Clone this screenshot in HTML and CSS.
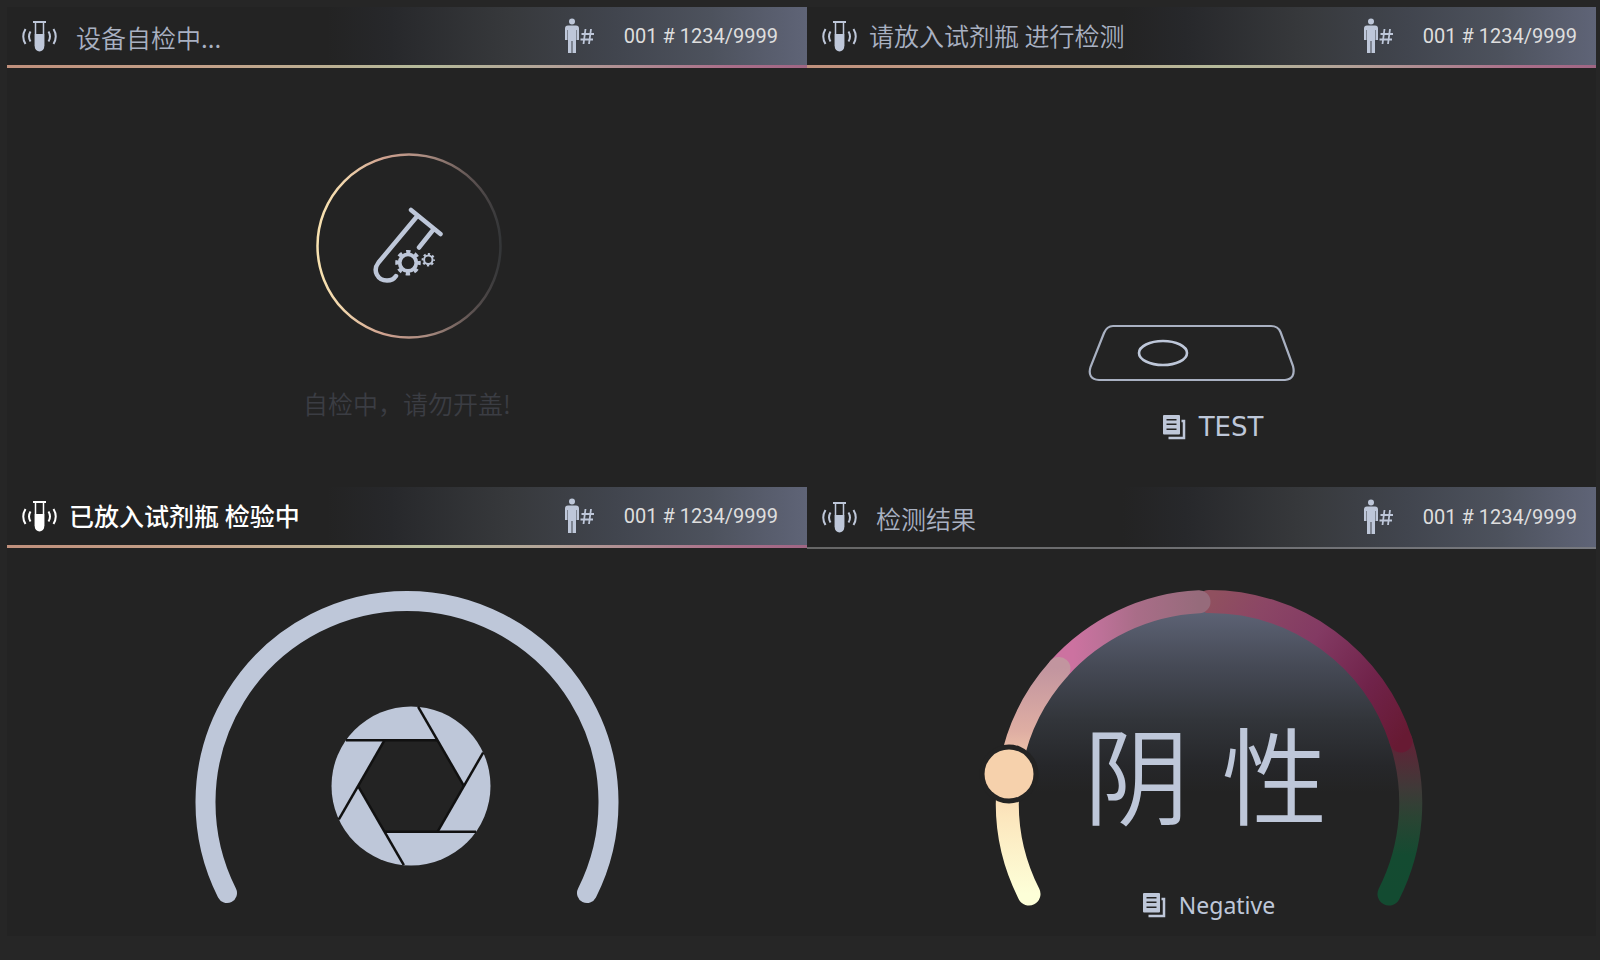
FILE: index.html
```html
<!DOCTYPE html>
<html lang="zh-CN">
<head>
    <meta charset="UTF-8">
    <meta name="viewport" content="width=device-width, initial-scale=1.0">
    <title>试剂检测</title>
    <link rel="stylesheet" href="styles.css">
</head>
<body>
    <!-- Shared icons -->
    <svg class="sprite" aria-hidden="true">
        <symbol id="icon-tube" viewBox="1 0 36 32">
            <path d="M12 2H25" fill="none" stroke="currentColor" stroke-width="2"/>
            <path d="M14.500 2V26M22.500 2V26" fill="none" stroke="currentColor" stroke-width="1.500"/>
            <path d="M13.750 14H23.250V26.700a4.750 4.750 0 0 1-9.500 0z" fill="currentColor"/>
            <path d="M9.500 11.500Q6.500 16.500 9.500 21.500M4.500 9Q0 16.500 4.500 24M27.500 11.500Q30.500 16.500 27.500 21.500M32.500 9Q37 16.500 32.500 24" fill="none" stroke="currentColor" stroke-width="2"/>
        </symbol>
        <symbol id="icon-person" viewBox="0 0 30 36">
            <circle cx="8" cy="3.500" r="3" fill="currentColor"/>
            <path d="M4 7.500H12Q15 7.500 15 10.500V22H12.500V12H12V35H8.500V23H7.500V35H4V12H3.500V22H1V10.500Q1 7.500 4 7.500z" fill="currentColor"/>
            <path d="M21.500 11L19.500 26M27 11L25 26M17.500 16H30M16.500 21.500H29" fill="none" stroke="currentColor" stroke-width="1.800"/>
        </symbol>
        <symbol id="icon-doc" viewBox="0 0 24 26">
            <path d="M2 1H17a1 1 0 0 1 1 1V19.500a1 1 0 0 1-1 1H2a1 1 0 0 1-1-1V2a1 1 0 0 1 1-1zM4.500 5V6.500H14.500V5zM4.500 9.500V11H14.500V9.500zM4.500 14.500V16H14.500V14.500z" fill="currentColor" fill-rule="evenodd"/>
            <path d="M19.500 7H22V24H6.500" fill="none" stroke="currentColor" stroke-width="2.500"/>
        </symbol>
    </svg>

    <main class="board">
        <section class="panel panel-check">
            <header class="bar bar-wide">
                <svg class="icon-tube"><use href="#icon-tube"/></svg>
                <h2 class="title">设备自检中...</h2>
                <svg class="icon-person"><use href="#icon-person"/></svg>
                <span class="count">001 # 1234/9999</span>
            </header>
            <div class="stage">
                <svg class="spinner" viewBox="0 0 186 186">
                    <defs>
                        <linearGradient id="ring" x1="0" x2="1" y1="0" y2="0">
                            <stop offset="0" stop-color="#f8e2b0"/>
                            <stop offset="0.15" stop-color="#f0d4ac"/>
                            <stop offset="0.36" stop-color="#cfa18f"/>
                            <stop offset="0.6" stop-color="#a98b80"/>
                            <stop offset="0.85" stop-color="#5b5150"/>
                            <stop offset="1" stop-color="#343638"/>
                        </linearGradient>
                    </defs>
                    <circle cx="93" cy="93" r="91.500" fill="none" stroke="url(#ring)" stroke-width="2.500"/>
                    <path d="M95 57L124.500 81M100.500 64L62.500 109.500C56 118 62 127.500 71 127.500Q77 127.500 80 123M117 77L103 94.500" fill="none" stroke="#bec7d9" stroke-width="4.500" stroke-linecap="round" stroke-linejoin="round"/>
                    <circle cx="92" cy="109.700" r="8.300" fill="none" stroke="#bec7d9" stroke-width="3.800"/>
                    <circle cx="92" cy="109.700" r="11" fill="none" stroke="#bec7d9" stroke-width="3.500" stroke-dasharray="4.320" stroke-dashoffset="2.160"/>
                    <circle cx="112.300" cy="106.700" r="4.200" fill="none" stroke="#bec7d9" stroke-width="2"/>
                    <circle cx="112.300" cy="106.700" r="5.700" fill="none" stroke="#bec7d9" stroke-width="2" stroke-dasharray="2.238" stroke-dashoffset="1.119"/>
                </svg>
                <p class="hint">自检中，请勿开盖!</p>
            </div>
        </section>

        <section class="panel panel-insert">
            <header class="bar">
                <svg class="icon-tube"><use href="#icon-tube"/></svg>
                <h2 class="title">请放入试剂瓶 进行检测</h2>
                <svg class="icon-person"><use href="#icon-person"/></svg>
                <span class="count">001 # 1234/9999</span>
            </header>
            <div class="stage">
                <svg class="slot" viewBox="0 0 208 58">
                    <path d="M25 2H183Q190 2 192.500 8L205 42Q208 55 197 56H11Q-1 55 2.500 43L16 9Q19 2 25 2z" fill="none" stroke="#a9b1c2" stroke-width="2.200"/>
                    <ellipse cx="75" cy="29" rx="24" ry="12" fill="none" stroke="#bec7d9" stroke-width="2.600"/>
                </svg>
                <a class="label label-test" href="#test">
                    <svg class="icon-doc"><use href="#icon-doc"/></svg>
                    TEST
                </a>
            </div>
        </section>

        <section class="panel panel-testing">
            <header class="bar bar-active">
                <svg class="icon-tube"><use href="#icon-tube"/></svg>
                <h2 class="title">已放入试剂瓶 检验中</h2>
                <svg class="icon-person"><use href="#icon-person"/></svg>
                <span class="count">001 # 1234/9999</span>
            </header>
            <div class="stage">
                <svg class="gauge" viewBox="-240 -215 480 325">
                    <path d="M-180 91A201.500 201.500 0 1 1 180 91" fill="none" stroke="#bec7d9" stroke-width="20" stroke-linecap="round"/>
                    <!-- Shutter -->
                    <g transform="translate(4 -16)">
                        <circle r="79.500" fill="#bec7d9"/>
                        <path d="M-26.500-45.800H26.500L53 0L26.500 45.800H-26.500L-53 0z" fill="#232323"/>
                        <g stroke="#111" stroke-width="2.500">
                            <path id="blade" d="M27-45.800H-65"/>
                            <use href="#blade" transform="rotate(60)"/>
                            <use href="#blade" transform="rotate(120)"/>
                            <use href="#blade" transform="rotate(180)"/>
                            <use href="#blade" transform="rotate(240)"/>
                            <use href="#blade" transform="rotate(300)"/>
                        </g>
                    </g>
                </svg>
            </div>
        </section>

        <section class="panel panel-result">
            <header class="bar bar-wide bar-plain">
                <svg class="icon-tube"><use href="#icon-tube"/></svg>
                <h2 class="title">检测结果</h2>
                <svg class="icon-person"><use href="#icon-person"/></svg>
                <span class="count">001 # 1234/9999</span>
            </header>
            <div class="stage">
                <svg class="gauge" viewBox="-240 -215 480 325">
                    <defs>
                        <linearGradient id="dome" gradientUnits="userSpaceOnUse" x1="0" x2="0" y1="-192" y2="-10">
                            <stop offset="0" stop-color="#5d6375"/>
                            <stop offset="0.3" stop-color="#464a56"/>
                            <stop offset="0.6" stop-color="#32353a"/>
                            <stop offset="0.85" stop-color="#26272a"/>
                            <stop offset="1" stop-color="#232323"/>
                        </linearGradient>
                        <linearGradient id="seg-low" gradientUnits="userSpaceOnUse" x1="0" x2="0" y1="91" y2="-135">
                            <stop offset="0" stop-color="#fdffd8"/>
                            <stop offset="0.35" stop-color="#fce6bd"/>
                            <stop offset="0.55" stop-color="#f5cfad"/>
                            <stop offset="0.72" stop-color="#dfaea3"/>
                            <stop offset="1" stop-color="#c2959f"/>
                        </linearGradient>
                        <linearGradient id="seg-mid" gradientUnits="userSpaceOnUse" x1="-150" x2="-10" y1="0" y2="0">
                            <stop offset="0.1" stop-color="#cc72a0"/>
                            <stop offset="0.3" stop-color="#bd7198"/>
                            <stop offset="0.55" stop-color="#a96d88"/>
                            <stop offset="1" stop-color="#966b7b"/>
                        </linearGradient>
                        <linearGradient id="seg-high" gradientUnits="userSpaceOnUse" x1="0" x2="192" y1="-201" y2="-62">
                            <stop offset="0" stop-color="#90505f"/>
                            <stop offset="0.2" stop-color="#8b4665"/>
                            <stop offset="0.45" stop-color="#833a63"/>
                            <stop offset="0.75" stop-color="#70234a"/>
                            <stop offset="1" stop-color="#671a33"/>
                        </linearGradient>
                        <linearGradient id="seg-end" gradientUnits="userSpaceOnUse" x1="0" x2="0" y1="-62" y2="91">
                            <stop offset="0" stop-color="#612337"/>
                            <stop offset="0.3" stop-color="#403938"/>
                            <stop offset="0.5" stop-color="#2a4433"/>
                            <stop offset="0.75" stop-color="#144b31"/>
                            <stop offset="1" stop-color="#134b31"/>
                        </linearGradient>
                    </defs>
                    <circle r="192" fill="url(#dome)"/>
                    <g fill="none" stroke-width="23" stroke-linecap="round">
                        <path d="M192-62A201.500 201.500 0 0 1 180 91" stroke="url(#seg-end)"/>
                        <path d="M0-201.500A201.500 201.500 0 0 1 192-62" stroke="url(#seg-high)"/>
                        <path d="M-150-134.500A201.500 201.500 0 0 1-10-201.200" stroke="url(#seg-mid)"/>
                        <path d="M-180 91A201.500 201.500 0 0 1-150-134.500" stroke="url(#seg-low)"/>
                    </g>
                    <circle cx="-200" cy="-29" r="29.500" fill="#232323"/>
                    <circle cx="-200" cy="-29" r="24.500" fill="#f6d1ac"/>
                </svg>
                <p class="result"><span>阴</span><span>性</span></p>
                <a class="label label-result" href="#negative">
                    <svg class="icon-doc"><use href="#icon-doc"/></svg>
                    Negative
                </a>
            </div>
        </section>
    </main>
</body>
</html>
```

FILE: styles.css
```css
* {
    box-sizing: border-box;
}
body {
    font-family: 'Noto Sans', 'Noto Sans CJK SC', sans-serif;
    background-color: #262626;
    color: #bec7d9;
    margin: 0;
}
h2, p {
    margin: 0;
    font-weight: normal;
}
svg {
    display: block;
    flex: none;
}
.sprite {
    position: absolute;
    width: 0;
    height: 0;
}
.board {
    display: grid;
    grid-template-columns: 800fr 789fr;
    grid-template-rows: 480fr 449fr;
    min-height: 100vh;
    padding: 7px 4px 24px 7px;
}
.panel {
    display: flex;
    flex-direction: column;
    background-color: #232323;
}

/* Top bar */
.bar {
    display: flex;
    align-items: center;
    height: 61px;
    padding: 0 29px 3px 15px;
    background: linear-gradient(to right, #c0907c, #c3a189 25%, #b5ba9a 52%, #b3a398 68%, #ab6f8a 90%, #a06684) bottom / 100% 3px no-repeat,
        linear-gradient(to right, #232323 40%, #27282b 48%, #37393c 63%, #41454e 76%, #4d525d 88%, #5f6477);
}
.bar-plain {
    height: 62px;
    background: linear-gradient(to right, #666, #77797f) bottom / 100% 2px no-repeat,
        linear-gradient(to right, #232323 40%, #27282b 48%, #37393c 63%, #41454e 76%, #4d525d 88%, #5f6477);
}
.panel-insert .bar,
.panel-result .bar {
    padding-right: 19px;
}
.icon-tube {
    width: 36px;
    height: 32px;
}
.icon-person {
    width: 30px;
    height: 36px;
}
.title {
    flex: 1;
    margin-left: 11px;
    padding-bottom: 2px;
    font-family: 'Noto Sans CJK SC', sans-serif;
    font-size: 25px;
    font-weight: 350;
    line-height: 32px;
    color: #a9b1c2;
}
.bar-wide .title {
    margin-left: 18px;
    padding: 2px 0 0;
}
.bar-active .icon-tube,
.bar-active .title {
    color: #fff;
}
.bar-active .title {
    font-weight: 500;
}
.count {
    margin-left: 30px;
    font-family: Roboto, sans-serif;
    font-size: 20px;
    color: #dedede;
}

/* Stage */
.stage {
    flex: 1;
    display: flex;
    flex-direction: column;
    align-items: center;
}
.panel-check .stage {
    padding: 85px 0 0 3px;
}
.spinner {
    width: 186px;
    height: 186px;
}
.hint {
    margin-top: 46px;
    padding-right: 3px;
    font-family: 'Noto Sans CJK SC', sans-serif;
    font-size: 25px;
    font-weight: 350;
    line-height: 36px;
    color: #3b3d43;
}
.panel-insert .stage {
    padding: 256px 20px 0 0;
}
.slot {
    width: 208px;
    height: 58px;
}
.label {
    display: flex;
    align-items: center;
    color: #bec7d9;
    text-decoration: none;
    line-height: 32px;
}
.icon-doc {
    width: 24px;
    height: 26px;
}
.label-test {
    gap: 13px;
    margin: 29px 0 0 42px;
    font-family: 'DejaVu Sans', sans-serif;
    font-size: 26px;
}
.label-result {
    gap: 13px;
    font-size: 23px;
}
.panel-testing .stage,
.panel-result .stage {
    display: grid;
    grid-template-rows: 325px 1fr;
    justify-items: center;
    padding-top: 39px;
}
.gauge {
    grid-area: 1 / 1;
    width: 480px;
    height: 325px;
}
.panel-result .stage {
    padding-left: 14px;
}
.result {
    grid-area: 1 / 1;
    align-self: center;
    display: flex;
    gap: 32px;
    padding: 40px 6px 0 0;
    font-family: 'Noto Sans CJK SC', sans-serif;
    font-size: 106px;
    font-weight: 350;
    line-height: 120px;
}
.label-result {
    grid-area: 1 / 1;
    align-self: end;
    margin-bottom: -8px;
}
```
